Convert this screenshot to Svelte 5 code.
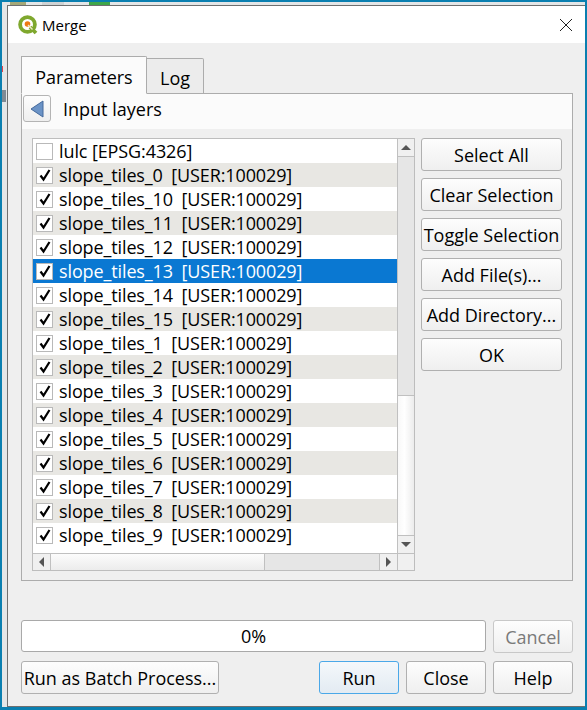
<script lang="ts">
  const layers = [
    "slope_tiles_0", "slope_tiles_10", "slope_tiles_11", "slope_tiles_12",
    "slope_tiles_13", "slope_tiles_14", "slope_tiles_15", "slope_tiles_1",
    "slope_tiles_2", "slope_tiles_3", "slope_tiles_4", "slope_tiles_5",
    "slope_tiles_6", "slope_tiles_7", "slope_tiles_8", "slope_tiles_9",
  ];
  const selected = "slope_tiles_13";
  const actions = ["Select All", "Clear Selection", "Toggle Selection", "Add File(s)...", "Add Directory...", "OK"];
</script>

<div class="desktop">
  <!-- bits of the main window showing behind the dialog -->
  <div class="behind">
    <i class="bit bit-olive"></i>
    <i class="bit bit-green"></i>
    <i class="bit bit-grey"></i>
    <i class="bit bit-red"></i>
    <i class="bit bit-dark"></i>
  </div>

  <div class="window">
    <div class="titlebar">
      <svg class="logo" width="22" height="22" viewBox="0 0 22 22">
        <circle cx="10.5" cy="10.5" r="7.4" fill="none" stroke="#7fa82e" stroke-width="3.8" />
        <path d="M13 13l6 6" stroke="#7fa82e" stroke-width="3.8" />
        <circle cx="10.5" cy="10" r="2.8" fill="#ee7913" />
        <path d="M11 11l4.5 4.5" stroke="#f0e8c8" stroke-width="1.4" />
      </svg>
      <span class="title">Merge</span>
      <svg class="close" width="14" height="14" viewBox="0 0 14 14">
        <path d="M1 1l12 12M13 1L1 13" stroke="#222" stroke-width="1" fill="none" />
      </svg>
    </div>

    <div class="body">
      <div class="tabs">
        <div class="tab active">Parameters</div>
        <div class="tab">Log</div>
      </div>

      <div class="pane">
        <div class="panel-head">
          <button class="back" aria-label="Back">
            <svg width="14" height="18" viewBox="0 0 14 18">
              <path d="M13 1v16L1 9z" fill="#6b93c6" stroke="#44699c" stroke-width="1" />
            </svg>
          </button>
          <span>Input layers</span>
        </div>

        <div class="panel">
          <div class="listbox">
            <div class="rows">
              <div class="row">
                <span class="check"></span>
                <span class="lulc">lulc [EPSG:4326]</span>
              </div>
              {#each layers as name, i}
                <div class="row" class:alt={i % 2 === 0} class:selected={name === selected}>
                  <span class="check">
                    <svg width="14" height="14" viewBox="0 0 14 14">
                      <path d="M2.5 7.5l3 4 6-9.5" fill="none" stroke="#000" stroke-width="2.2" />
                    </svg>
                  </span>
                  <span class="layer">{name} [USER:100029]</span>
                </div>
              {/each}
            </div>

            <div class="vbar">
              <div class="arrow"><i class="tri up"></i></div>
              <div class="vtrack"><div class="vthumb"></div></div>
              <div class="arrow down"><i class="tri dn"></i></div>
            </div>
            <div class="hbar">
              <div class="harrow"><i class="tri lf"></i></div>
              <div class="htrack"><div class="hthumb"></div></div>
              <div class="harrow end"><i class="tri rt"></i></div>
            </div>
            <div class="corner"></div>
          </div>

          <div class="actions">
            {#each actions as label}
              <button class="btn">{label}</button>
            {/each}
          </div>
        </div>
      </div>

      <div class="progress-row">
        <div class="progress">0%</div>
        <button class="btn cancel" disabled>Cancel</button>
      </div>

      <div class="footer">
        <button class="btn batch">Run as Batch Process...</button>
        <div class="spacer"></div>
        <button class="btn small run">Run</button>
        <button class="btn small">Close</button>
        <button class="btn small">Help</button>
      </div>
    </div>
  </div>
</div>

<style>
  :global(body) {
    margin: 0;
    background: #0a7fb0;
  }
  .desktop {
    position: relative;
    width: 587px;
    height: 710px;
    background: #0a7fb0;
    overflow: hidden;
    box-sizing: border-box;
    padding: 5px 2px 3px 7px;
    font-family: "Open Sans", "Noto Sans", sans-serif;
    font-size: 18px;
    color: #000;
  }
  .behind {
    position: absolute;
    left: 2px;
    top: 2px;
    right: 2px;
    bottom: 3px;
    background: #e4e6e7;
  }
  .bit {
    position: absolute;
    display: block;
  }
  .bit-olive {
    left: 8px;
    top: 0;
    width: 16px;
    height: 3px;
    background: #a5a878;
  }
  .bit-green {
    left: 87px;
    top: 0;
    width: 21px;
    height: 3px;
    background: #3fa64a;
  }
  .bit-grey {
    left: 40px;
    top: 0;
    width: 22px;
    height: 3px;
    background: #cfd3d4;
  }
  .bit-red {
    left: 0;
    top: 64px;
    width: 1px;
    height: 6px;
    background: #e8404a;
  }
  .bit-dark {
    left: 0;
    top: 88px;
    width: 4px;
    height: 12px;
    background: #7f8a94;
  }
  .window {
    position: relative;
    height: 100%;
    box-sizing: border-box;
    border-top: 1px solid #6f6f6f;
    border-left: 1px solid #6f6f6f;
    border-bottom: 1px solid #6f6f6f;
    background: #efefef;
    display: flex;
    flex-direction: column;
  }
  .titlebar {
    height: 37px;
    background: #fff;
    display: flex;
    align-items: center;
    padding: 0 12px 0 9px;
    flex: none;
  }
  .logo {
    margin-right: 3px;
  }
  .title {
    font-size: 15px;
  }
  .close {
    margin-left: auto;
  }
  .body {
    flex: 1;
    display: flex;
    flex-direction: column;
    padding: 13px 12px 0 13px;
    min-height: 0;
  }
  .tabs {
    display: flex;
    align-items: flex-end;
    height: 38px;
    margin-bottom: -1px;
    position: relative;
    flex: none;
  }
  .tab {
    box-sizing: border-box;
    height: 36px;
    width: 57px;
    padding-top: 4px;
    background: #ececec;
    border: 1px solid #acacac;
    border-left: 0;
    border-radius: 0 2px 0 0;
    display: flex;
    align-items: center;
    justify-content: center;
  }
  .tab.active {
    height: 38px;
    width: 126px;
    background: #fbfbfb;
    border-left: 1px solid #acacac;
    border-bottom-color: #fbfbfb;
  }
  .pane {
    box-sizing: border-box;
    height: 488px;
    border: 1px solid #acacac;
    background: #efefef;
    flex: none;
  }
  .panel-head {
    box-sizing: border-box;
    height: 35px;
    background: #fbfbfb;
    display: flex;
    align-items: center;
    gap: 12px;
    padding: 0 0 6px 1px;
  }
  .back {
    width: 28px;
    height: 27px;
    padding: 0;
    display: flex;
    align-items: center;
    justify-content: center;
    background: linear-gradient(#fdfdfd, #efefef);
    border: 1px solid #b4b4b4;
    border-radius: 3px;
  }
  .panel {
    display: flex;
    padding: 9px 10px 0;
    gap: 6px;
  }
  .listbox {
    box-sizing: border-box;
    width: 383px;
    height: 433px;
    border: 1px solid #bdbdbd;
    background: #fff;
    display: grid;
    grid-template-columns: 364px 17px;
    grid-template-rows: 414px 17px;
  }
  .rows {
    overflow: hidden;
  }
  .row {
    height: 24px;
    display: flex;
    align-items: center;
    gap: 6px;
    padding-left: 3px;
    white-space: nowrap;
  }
  .row.alt {
    background: #e8e7e3;
  }
  .row.selected {
    background: #0a78d2;
    color: #fff;
  }
  .lulc {
    letter-spacing: -0.1px;
  }
  .layer {
    letter-spacing: -0.12px;
    word-spacing: 4px;
  }
  .check {
    box-sizing: border-box;
    width: 17px;
    height: 17px;
    background: #fff;
    border: 1px solid #b9b9b9;
    display: flex;
    align-items: center;
    justify-content: center;
    flex: none;
  }
  .vbar {
    background: #e6e6e6;
    border-left: 1px solid #c0c0c0;
    display: flex;
    flex-direction: column;
  }
  .arrow {
    height: 17px;
    background: #f0f0f0;
    display: flex;
    align-items: center;
    justify-content: center;
    border-bottom: 1px solid #c0c0c0;
    flex: none;
  }
  .arrow.down {
    border-bottom: 0;
    border-top: 1px solid #c0c0c0;
  }
  .vtrack {
    flex: 1;
    display: flex;
    flex-direction: column;
    justify-content: flex-end;
  }
  .vthumb {
    height: 139px;
    border-top: 1px solid #c0c0c0;
    background: linear-gradient(90deg, #f8f8f8, #fff 40%, #ececec);
  }
  .hbar {
    border-top: 1px solid #c0c0c0;
    display: flex;
    background: #e6e6e6;
  }
  .harrow {
    width: 17px;
    background: #f0f0f0;
    border-right: 1px solid #c0c0c0;
    display: flex;
    align-items: center;
    justify-content: center;
    flex: none;
  }
  .harrow.end {
    border-right: 0;
    border-left: 1px solid #c0c0c0;
  }
  .htrack {
    flex: 1;
  }
  .hthumb {
    width: 214px;
    height: 100%;
    box-sizing: border-box;
    border-right: 1px solid #c0c0c0;
    background: linear-gradient(#fcfcfc, #ececec);
  }
  .corner {
    border-top: 1px solid #c0c0c0;
    border-left: 1px solid #c0c0c0;
    background: #f0f0f0;
  }
  .tri {
    display: block;
    width: 0;
    height: 0;
    border: 5px solid transparent;
  }
  .tri.up {
    border-top: 0;
    border-bottom: 5px solid #555;
  }
  .tri.dn {
    border-bottom: 0;
    border-top: 5px solid #555;
  }
  .tri.lf {
    border-left: 0;
    border-right: 5px solid #555;
  }
  .tri.rt {
    border-right: 0;
    border-left: 5px solid #555;
  }
  .actions {
    display: flex;
    flex-direction: column;
    gap: 7px;
    width: 141px;
  }
  .btn {
    box-sizing: border-box;
    height: 33px;
    padding: 0;
    font: inherit;
    color: #000;
    background: linear-gradient(#fdfdfd, #efefef);
    border: 1px solid #b0b0b0;
    border-radius: 3px;
    white-space: nowrap;
  }
  .progress-row {
    display: flex;
    gap: 7px;
    margin-top: 39px;
    flex: none;
  }
  .progress {
    box-sizing: border-box;
    width: 465px;
    height: 32px;
    background: #fff;
    border: 1px solid #a9a9a9;
    border-radius: 3px;
    display: flex;
    align-items: center;
    justify-content: center;
  }
  .cancel {
    width: 80px;
    color: #7a7a7a;
    border-color: #c8c8c8;
  }
  .footer {
    display: flex;
    gap: 7px;
    margin-top: 8px;
    flex: none;
  }
  .batch {
    width: 198px;
  }
  .spacer {
    flex: 1;
  }
  .small {
    width: 80px;
  }
  .run {
    border-color: #4aa8e8;
    background: linear-gradient(#f4f8fb, #e3ebf2);
  }
</style>
